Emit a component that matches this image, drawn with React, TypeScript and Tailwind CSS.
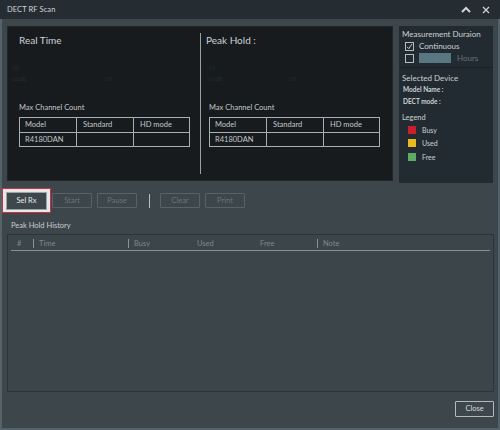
import React from "react";

const Btn = ({ label, disabled }: { label: string; disabled?: boolean }) => (
  <div
    className={
      disabled
        ? "w-[40px] h-[15px] border border-[#56636a] rounded-[1px] flex items-center justify-center text-[7.5px] text-[#69757a]"
        : "w-[40px] h-[17px] border border-[#aab2b5] rounded-[1px] flex items-center justify-center text-[7.5px] text-[#e4e7e8] bg-[#3d474c]"
    }
  >
    {label}
  </div>
);

const ChanTable = () => (
  <div className="w-[171px] border border-[#a9afb2] text-[7.5px] text-[#c3c8ca]">
    <div className="flex h-[14px]">
      <div className="w-[57px] border-r border-[#a9afb2] pl-[5px] flex items-center">Model</div>
      <div className="w-[57px] border-r border-[#a9afb2] pl-[6px] flex items-center">Standard</div>
      <div className="flex-1 pl-[6px] flex items-center">HD mode</div>
    </div>
    <div className="flex h-[14px] border-t border-[#a9afb2]">
      <div className="w-[57px] border-r border-[#a9afb2] pl-[5px] flex items-center">R4180DAN</div>
      <div className="w-[57px] border-r border-[#a9afb2]"></div>
      <div className="flex-1"></div>
    </div>
  </div>
);

const Check = ({ checked }: { checked?: boolean }) => (
  <div className="w-[9px] h-[9px] border border-[#b5bcbf] flex items-center justify-center">
    {checked && (
      <svg width="7" height="7" viewBox="0 0 7 7">
        <path d="M1 3.8 L2.8 5.6 L6 1" stroke="#d6dadc" strokeWidth="0.9" fill="none" />
      </svg>
    )}
  </div>
);

export default function App() {
  return (
    <div className="w-[500px] h-[430px] bg-[#3c464b] flex flex-col font-['Lato','Noto_Sans',sans-serif] select-none">
      {/* Title bar */}
      <div className="h-[19px] bg-[#252d32] flex items-center pl-[7px] pr-[10px]">
        <span className="text-[7.5px] text-[#d2d6d8] tracking-[0.1px]">DECT RF Scan</span>
        <div className="ml-auto flex items-center gap-[11px]">
          <svg width="10" height="7" viewBox="0 0 10 7">
            <path d="M1 6 L5 2 L9 6" stroke="#d0d4d6" strokeWidth="2" fill="none" />
          </svg>
          <svg width="8" height="8" viewBox="0 0 8 8">
            <path d="M1 1 L7 7 M7 1 L1 7" stroke="#d0d4d6" strokeWidth="1.2" fill="none" />
          </svg>
        </div>
      </div>

      {/* Body */}
      <div className="flex-1 flex flex-col border-x-2 border-b-2 border-[#56626a]">
        {/* Top row */}
        <div className="flex mt-[7px] pl-[5px] gap-[6px] items-start">
          <div className="w-[386px] h-[155px] bg-[#171b1e] border border-[#20272b] flex py-[6px]">
            <div className="w-[192px] pl-[11px] flex flex-col">
              <div className="text-[10px] leading-[14px] text-[#cdd1d3]">Real Time</div>
              <div className="mt-[17px] text-[6px] leading-[8px] text-[#242b2f] -ml-[9px]">-50</div>
              <div className="flex text-[6px] leading-[8px] text-[#242b2f] mt-[3px] -ml-[9px]">
                <span>-60dB</span>
                <span className="ml-[78px]">1%</span>
              </div>
              <div className="mt-auto text-[7.5px] leading-[10px] text-[#c3c8ca] mb-[4px]">Max Channel Count</div>
              <div className="mb-[27px]">
                <ChanTable />
              </div>
            </div>
            <div className="w-px bg-[#9aa1a4]"></div>
            <div className="flex-1 pl-[5px] flex flex-col">
              <div className="text-[10px] leading-[14px] text-[#cdd1d3]">Peak Hold :</div>
              <div className="mt-[17px] text-[6px] leading-[8px] text-[#242b2f]">-50</div>
              <div className="flex text-[6px] leading-[8px] text-[#242b2f] mt-[3px]">
                <span>-60dB</span>
                <span className="ml-[66px]">1%</span>
              </div>
              <div className="mt-auto ml-[3px] text-[7.5px] leading-[10px] text-[#c3c8ca] mb-[4px]">Max Channel Count</div>
              <div className="mb-[27px] ml-[3px]">
                <ChanTable />
              </div>
            </div>
          </div>

          {/* Right panel */}
          <div className="w-[94px] h-[157px] bg-[#222b31] flex flex-col">
            <div className="px-[3px] pt-[3px] pb-[4px] border-b border-[#1b2226]">
              <div className="text-[8px] leading-[10px] text-[#cdd1d3]">Measurement Duraion</div>
              <div className="flex items-center mt-[2px] pl-[3px] h-[10px]">
                <Check checked />
                <span className="ml-[5px] text-[8px] text-[#cdd1d3]">Continuous</span>
              </div>
              <div className="flex items-center mt-[2px] pl-[3px] h-[10px]">
                <Check />
                <div className="ml-[5px] w-[32px] h-[10px] bg-[#587780] flex items-center justify-center text-[6px] text-[#6f8f97]">- -:- -</div>
                <span className="ml-[6px] text-[8px] text-[#66737a]">Hours</span>
              </div>
            </div>
            <div className="px-[3px] pt-[5px]">
              <div className="text-[8px] leading-[10px] text-[#cdd1d3]">Selected Device</div>
              <div className="mt-[2px] pl-[1px] text-[6.5px] leading-[10px] font-bold text-[#cdd1d3]">Model Name :</div>
              <div className="mt-[2px] pl-[1px] text-[6.5px] leading-[10px] font-bold text-[#cdd1d3]">DECT mode :</div>
              <div className="mt-[6px] text-[7.5px] leading-[10px] text-[#cdd1d3]">Legend</div>
              <div className="mt-[3px] pl-[6px] flex flex-col gap-[5px]">
                <div className="flex items-center h-[8px]">
                  <div className="w-[8px] h-[8px] bg-[#c8202a]"></div>
                  <span className="ml-[6px] text-[7px] text-[#cdd1d3]">Busy</span>
                </div>
                <div className="flex items-center h-[8px]">
                  <div className="w-[8px] h-[8px] bg-[#eab920]"></div>
                  <span className="ml-[6px] text-[7px] text-[#cdd1d3]">Used</span>
                </div>
                <div className="flex items-center h-[8px] mt-[1px]">
                  <div className="w-[8px] h-[8px] bg-[#5cad63]"></div>
                  <span className="ml-[6px] text-[7px] text-[#cdd1d3]">Free</span>
                </div>
              </div>
            </div>
          </div>
        </div>

        {/* Buttons row */}
        <div className="flex items-center mt-[5px] h-[25px]">
          <div className="w-[49px] h-[25px] border border-[#d0303a] bg-[#e6e8e9] p-[2px] flex items-center justify-center">
            <div className="w-[41px] h-[18px] border border-[#9aa3a7] bg-[#3d474c] flex items-center justify-center text-[7.5px] text-[#e6e9ea]">
              Sel Rx
            </div>
          </div>
          <div className="ml-[1px] flex items-center gap-[5px]">
            <Btn label="Start" disabled />
            <Btn label="Pause" disabled />
          </div>
          <div className="ml-[12px] w-px h-[14px] bg-[#b9c0c2]"></div>
          <div className="ml-[10px] flex items-center gap-[5px]">
            <Btn label="Clear" disabled />
            <Btn label="Print" disabled />
          </div>
        </div>

        <div className="mt-[8px] pl-[9px] h-[10px] text-[7.5px] leading-[10px] text-[#c9ced0]">Peak Hold History</div>

        {/* History table */}
        <div className="mt-[3px] ml-[5px] w-[487px] h-[158px] border border-[#2b3439] bg-[#3b454a]">
          <div className="mx-[3px] mt-[2px] h-[14px] border-b border-[#868f93] flex items-center text-[7.5px] text-[#7f8a8f]">
            <div className="w-[22px] pl-[6px]">#</div>
            <div className="w-px h-[9px] bg-[#8a9397]"></div>
            <div className="w-[94px] pl-[5px]">Time</div>
            <div className="w-px h-[9px] bg-[#8a9397]"></div>
            <div className="w-[68px] pl-[5px]">Busy</div>
            <div className="w-[63px]">Used</div>
            <div className="w-[57px]">Free</div>
            <div className="w-px h-[9px] bg-[#8a9397]"></div>
            <div className="pl-[5px]">Note</div>
          </div>
        </div>

        <div className="mt-[9px] self-end mr-[4px] w-[39px] h-[16px] border border-[#b3babd] rounded-[1px] flex items-center justify-center text-[7.5px] text-[#d9dddf]">
          Close
        </div>
      </div>
    </div>
  );
}
